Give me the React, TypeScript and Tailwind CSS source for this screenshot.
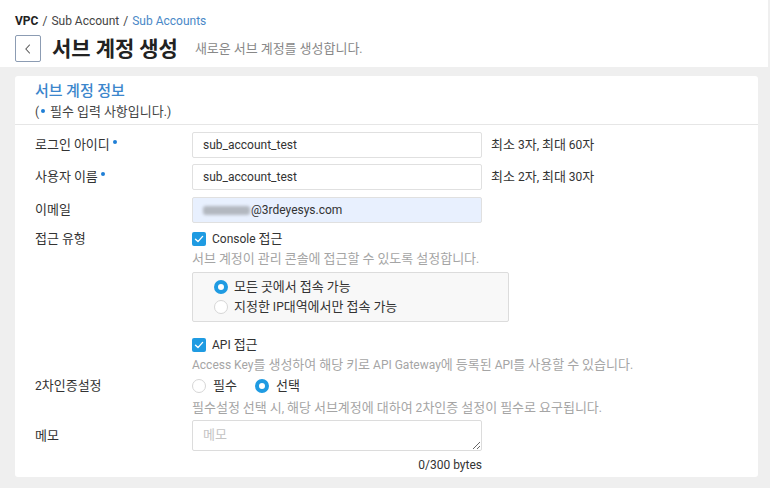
import React from "react";

const font = { fontFamily: "Roboto, 'Noto Sans CJK KR', sans-serif" };

function K({ t, c = "text-[13px]" }: { t: string; c?: string }) {
  const parts = t.split(/([\uAC00-\uD7A3]+)/);
  return (
    <>
      {parts.map((p, i) =>
        /[\uAC00-\uD7A3]/.test(p) ? (
          <span key={i} className={c}>
            {p}
          </span>
        ) : (
          <React.Fragment key={i}>{p}</React.Fragment>
        )
      )}
    </>
  );
}

function Dot() {
  return <span className="relative -top-[5px] ml-[3px] inline-block h-[4px] w-[4px] rounded-full bg-[#1f7fd6]" />;
}

function Check() {
  return (
    <span className="flex h-[14px] w-[14px] items-center justify-center rounded-[2px] bg-[#1f9be2]">
      <svg width="10" height="10" viewBox="0 0 10 10" fill="none">
        <path d="M1.5 5.2 L4 7.6 L8.6 2.4" stroke="white" strokeWidth="1.4" strokeLinecap="round" strokeLinejoin="round" />
      </svg>
    </span>
  );
}

function Radio({ on }: { on?: boolean }) {
  return on ? (
    <span className="inline-block h-[14px] w-[14px] shrink-0 rounded-full border-[4px] border-[#1f9be2] bg-white" />
  ) : (
    <span className="inline-block h-[14px] w-[14px] shrink-0 rounded-full border border-[#d6d6d6] bg-white" />
  );
}

function Row({ label, req, children, labelClass = "" }: { label: string; req?: boolean; children: React.ReactNode; labelClass?: string }) {
  return (
    <div className="flex">
      <div className={`w-[157px] shrink-0 text-[12px] text-[#333] ${labelClass}`}>
        <K t={label} />
        {req && <Dot />}
      </div>
      <div className="flex-1">{children}</div>
    </div>
  );
}

function Input({ value, blue, children }: { value?: string; blue?: boolean; children?: React.ReactNode }) {
  return (
    <div
      className={`flex h-[26px] w-[290px] items-center rounded-[2px] border border-[#e0e0e0] px-[10px] text-[12px] leading-[16px] text-[#333] ${
        blue ? "bg-[#e8f0fe]" : "bg-white"
      }`}
    >
      {value}
      {children}
    </div>
  );
}

export default function App() {
  return (
    <div className="min-h-[488px] w-[770px] bg-[#efefef]" style={font}>
      <div className="h-[67px] w-[768px] bg-white px-[15px] pt-[13px]">
        <div className="flex h-[16px] items-center text-[12px] leading-[16px] text-[#444]">
          <span className="font-bold text-[#222]">VPC</span>
          <span className="mx-[4px]">/</span>
          <span>Sub Account</span>
          <span className="mx-[4px]">/</span>
          <span className="text-[#4a88c7]">Sub Accounts</span>
        </div>
        <div className="mt-[6px] flex items-center">
          <div className="flex h-[27px] w-[26px] items-center justify-center rounded-[2px] border border-[#8c9cb3] bg-white">
            <svg width="12" height="12" viewBox="0 0 12 12" fill="none">
              <path d="M7.5 2 L3.8 6 L7.5 10" stroke="#555" strokeWidth="1.1" strokeLinecap="round" strokeLinejoin="round" />
            </svg>
          </div>
          <span className="ml-[11px] text-[20px] font-bold leading-[26px] text-[#222]">
            <K t="서브 계정 생성" c="text-[21px]" />
          </span>
          <span className="ml-[17px] mt-[1px] text-[12px] leading-[18px] text-[#888]">
            <K t="새로운 서브 계정를 생성합니다." />
          </span>
        </div>
      </div>

      <div className="mx-[15px] mt-[9px] h-[401px] w-[743px] rounded-[3px] bg-white">
        <div className="border-b border-[#e6e6e6] px-[20px] pb-[3px] pt-[5px]">
          <div className="h-[20px] text-[14px] font-medium leading-[20px] text-[#3b86cc]">
            <K t="서브 계정 정보" c="text-[15px]" />
          </div>
          <div className="mt-[2px] h-[18px] text-[12px] leading-[18px] text-[#444]">
            (<span className="relative -top-[3px] mx-[2px] inline-block h-[4px] w-[4px] rounded-full bg-[#1f7fd6]" />{" "}
            <K t="필수 입력 사항입니다.)" />
          </div>
        </div>

        <div className="px-[20px] pt-[7px]">
          <Row label="로그인 아이디" req labelClass="h-[26px] leading-[26px]">
            <div className="flex items-center">
              <Input value="sub_account_test" />
              <span className="ml-[9px] text-[12px] leading-[18px] text-[#333]">
                <K t="최소 3자, 최대 60자" />
              </span>
            </div>
          </Row>
          <div className="h-[6px]" />
          <Row label="사용자 이름" req labelClass="h-[26px] leading-[26px]">
            <div className="flex items-center">
              <Input value="sub_account_test" />
              <span className="ml-[9px] text-[12px] leading-[18px] text-[#333]">
                <K t="최소 2자, 최대 30자" />
              </span>
            </div>
          </Row>
          <div className="h-[7px]" />
          <Row label="이메일" labelClass="h-[26px] leading-[26px]">
            <Input blue>
              <span className="mr-[1px] inline-block h-[9px] w-[47px] rounded-[3px] bg-[#b3b8c0] blur-[1.5px]" />
              <span>@3rdeyesys.com</span>
            </Input>
          </Row>

          <div className="h-[7px]" />
          <Row label="접근 유형" labelClass="h-[18px] leading-[18px]">
            <div className="flex h-[18px] items-center">
              <Check />
              <span className="ml-[6px] text-[12px] leading-[18px] text-[#333]">
                <K t="Console 접근" />
              </span>
            </div>
            <div className="mt-[2px] h-[18px] whitespace-nowrap text-[12px] leading-[18px] text-[#a5a5a5]">
              <K t="서브 계정이 관리 콘솔에 접근할 수 있도록 설정합니다." />
            </div>
            <div className="mt-[4px] h-[50px] w-[317px] rounded-[2px] border border-[#dcdcdc] bg-[#f8f8f8] pl-[21px] pt-[4px]">
              <div className="flex h-[20px] items-center">
                <Radio on />
                <span className="ml-[6px] text-[12px] leading-[18px] text-[#333]">
                  <K t="모든 곳에서 접속 가능" />
                </span>
              </div>
              <div className="flex h-[20px] items-center">
                <Radio />
                <span className="ml-[6px] text-[12px] leading-[18px] text-[#333]">
                  <K t="지정한 IP대역에서만 접속 가능" />
                </span>
              </div>
            </div>
            <div className="mt-[14px] flex h-[18px] items-center">
              <Check />
              <span className="ml-[6px] text-[12px] leading-[18px] text-[#333]">
                <K t="API 접근" />
              </span>
            </div>
            <div className="mt-[2px] h-[18px] whitespace-nowrap text-[12px] leading-[18px] text-[#a5a5a5]">
              <K t="Access Key를 생성하여 해당 키로 API Gateway에 등록된 API를 사용할 수 있습니다." />
            </div>
          </Row>

          <div className="h-[3px]" />
          <Row label="2차인증설정" labelClass="h-[18px] leading-[18px]">
            <div className="flex h-[18px] items-center text-[12px] leading-[18px] text-[#333]">
              <Radio />
              <span className="ml-[7px]">
                <K t="필수" />
              </span>
              <span className="ml-[18px]" />
              <Radio on />
              <span className="ml-[7px]">
                <K t="선택" />
              </span>
            </div>
            <div className="mt-[4px] h-[18px] whitespace-nowrap text-[12px] leading-[18px] text-[#a5a5a5]">
              <K t="필수설정 선택 시, 해당 서브계정에 대하여 2차인증 설정이 필수로 요구됩니다." />
            </div>
          </Row>

          <div className="h-[3px]" />
          <Row label="메모" labelClass="h-[31px] leading-[31px]">
            <textarea
              placeholder="메모"
              className="block h-[31px] w-[290px] rounded-[2px] border border-[#dcdcdc] px-[10px] py-[5px] text-[13px] leading-[18px] text-[#333] outline-none placeholder:text-[#c4c4c4]"
              style={font}
            />
            <div className="mt-[5px] w-[290px] text-right text-[12px] leading-[18px] text-[#333]">0/300 bytes</div>
          </Row>
        </div>
      </div>
    </div>
  );
}
